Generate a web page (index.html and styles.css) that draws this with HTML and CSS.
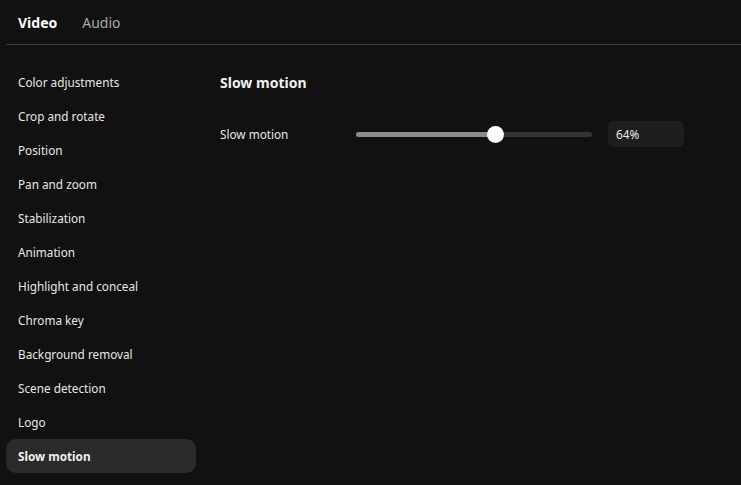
FILE: index.html
```html
<!DOCTYPE html>
<html lang="en">
<head>
  <meta charset="UTF-8">
  <title>Video settings</title>
  <link rel="stylesheet" href="styles.css">
</head>
<body>

  <div class="tabs">
    <span class="tab ativo">Video</span>
    <span class="tab">Audio</span>
  </div>

  <div class="painel">
    <ul class="menu">
      <li>Color adjustments</li>
      <li>Crop and rotate</li>
      <li>Position</li>
      <li>Pan and zoom</li>
      <li>Stabilization</li>
      <li>Animation</li>
      <li>Highlight and conceal</li>
      <li>Chroma key</li>
      <li>Background removal</li>
      <li>Scene detection</li>
      <li>Logo</li>
      <li class="selecionado">Slow motion</li>
    </ul>

    <div class="conteudo">
      <h2>Slow motion</h2>
      <div class="linha">
        <span class="rotulo">Slow motion</span>
        <div class="slider">
          <div class="trilha">
            <div class="preenchido" style="width: 59.3%"></div>
            <div class="botao" style="left: 59.3%"></div>
          </div>
        </div>
        <div class="valor">64%</div>
      </div>
    </div>
  </div>

</body>
</html>
```

FILE: styles.css
```css
body {
  margin: 0;
  background-color: #111111;
  color: #e6e6e6;
  font-family: "Noto Sans", "Open Sans", sans-serif;
  font-size: 11.75px;
  width: 741px;
  height: 485px;
  overflow: hidden;
}

.tabs {
  display: flex;
  gap: 25px;
  margin-left: 6px;
  padding: 0 0 0 12px;
  height: 44px;
  align-items: center;
  border-bottom: 1px solid #3a3a3a;
}

.tab {
  font-size: 14px;
  color: #a8a8a8;
  padding-top: 1px;
}

.tab.ativo {
  font-weight: bold;
  color: #ffffff;
}

.painel {
  display: flex;
}

.menu {
  list-style: none;
  margin: 20px 0 0 6px;
  padding: 0;
  width: 190px;
}

.menu li {
  height: 34px;
  line-height: 34px;
  padding-left: 12px;
  border-radius: 10px;
  color: #e6e6e6;
}

.menu li.selecionado {
  background-color: #2a2a2a;
  font-weight: bold;
  color: #f0f0f0;
}

.conteudo {
  margin-left: 24px;
  padding-top: 28px;
}

h2 {
  margin: 0;
  font-size: 14px;
  font-weight: bold;
  color: #f0f0f0;
  line-height: 20px;
}

.linha {
  display: flex;
  align-items: center;
  margin-top: 28px;
  height: 26px;
}

.rotulo {
  width: 136px;
}

.slider {
  width: 236px;
}

.trilha {
  position: relative;
  height: 5px;
  border-radius: 3px;
  background-color: #333333;
}

.preenchido {
  height: 100%;
  border-radius: 3px;
  background-color: #8a8a8a;
}

.botao {
  position: absolute;
  top: 50%;
  width: 17px;
  height: 17px;
  margin: -8.5px 0 0 -8.5px;
  border-radius: 50%;
  background-color: #ffffff;
}

.valor {
  margin-left: 16px;
  width: 68px;
  height: 26px;
  line-height: 26px;
  padding-left: 8px;
  border-radius: 6px;
  background-color: #1e1e1e;
}
```
